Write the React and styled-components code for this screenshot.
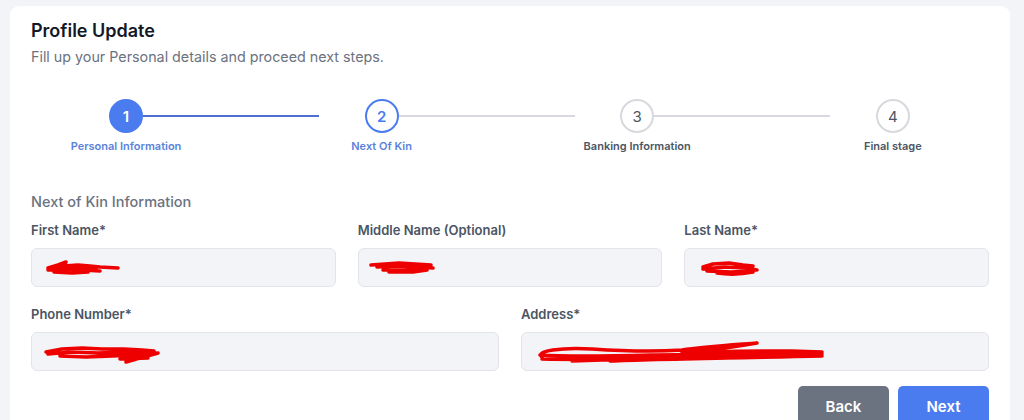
import React from 'react'
import styled, { createGlobalStyle } from 'styled-components';

const steps = [
  { n: 1, label: 'Personal Information', state: 'done' },
  { n: 2, label: 'Next Of Kin', state: 'active' },
  { n: 3, label: 'Banking Information', state: 'todo' },
  { n: 4, label: 'Final stage', state: 'todo' },
];

// scribbles that hide the filled-in values
const Scribble = ({ w, d }) => (
  <svg width={w} height="26" viewBox={`0 0 ${w} 26`} fill="none">
    <path d={d} stroke="#ee0000" strokeWidth="3.6" strokeLinecap="round" strokeLinejoin="round" />
  </svg>
);

const Field = ({ label, children }) => (
  <FieldWrap>
    <Label>{label}</Label>
    <Input>{children}</Input>
  </FieldWrap>
);

const App = () => {
  return (
    <>
      <GlobalStyle />
      <Page>
        <Card>
          <Title>Profile Update</Title>
          <Subtitle>Fill up your Personal details and proceed next steps.</Subtitle>

          <Stepper>
            {steps.map((s, i) => (
              <Step key={s.n}>
                <Marker>
                  <Circle $state={s.state}>{s.n}</Circle>
                  <StepLabel $state={s.state}>{s.label}</StepLabel>
                </Marker>
                {i < steps.length - 1 && <Connector $done={s.state === 'done'} />}
              </Step>
            ))}
          </Stepper>

          <Section>Next of Kin Information</Section>

          <Row $cols={3}>
            <Field label="First Name*">
              <Scribble w={80} d="M6 13 L16 10 L24 7 L22 11 L36 10 L48 11 L58 12 L76 13 M6 15 L22 14 L40 15 L58 16 M12 17 L30 18 L46 17 M14 12 L40 13 L54 14" />
            </Field>
            <Field label="Middle Name (Optional)">
              <Scribble w={70} d="M2 10 L16 9 L30 8 L46 9 L62 10 M8 12 L28 11 L50 12 L64 13 M14 15 L36 15 L56 15 M20 17 L44 17 L58 15" />
            </Field>
            <Field label="Last Name*">
              <Scribble w={70} d="M8 12 L18 9 L34 8 L48 10 L58 11 M8 14 L30 12 L52 13 L62 15 M12 16 L36 17 L56 16 M22 18 C36 20 48 19 58 17" />
            </Field>
          </Row>

          <Row $cols={2}>
            <Field label="Phone Number*">
              <Scribble w={120} d="M4 13 L20 10 L40 9 L60 10 L82 10 L100 11 L112 12 M6 15 L30 13 L56 14 L84 13 L108 15 M18 17 L44 18 L70 17 L96 16 L114 14 M78 20 L106 19 M84 23 L116 14" />
            </Field>
            <Field label="Address*">
              <Scribble w={300} d="M10 18 C2 12 30 8 60 10 C90 12 120 13 150 11 C170 8 200 6 225 4 C200 8 175 12 150 14 C180 12 220 12 260 12 L290 13 M8 16 C40 18 80 17 120 16 C160 15 200 16 240 15 L290 15 M10 20 C60 21 110 20 160 19 C200 19 240 18 280 17 M40 22 C80 21 120 19 160 18 M78 22 C120 20 200 19 290 17" />
            </Field>
          </Row>

          <Actions>
            <Button $variant="secondary">Back</Button>
            <Button>Next</Button>
          </Actions>
        </Card>
      </Page>
    </>
  )
}

export default App;

const GlobalStyle = createGlobalStyle`
  html, body {
    margin: 0;
    padding: 0;
    background: #f3f4f8;
    font-family: Inter, "Liberation Sans", sans-serif;
  }
`

const Page = styled.div`
  width: 1024px;
  height: 420px;
  overflow: hidden;
  padding: 6px 14px 0 10px;
  box-sizing: border-box;
`

const Card = styled.div`
  background: #ffffff;
  border-radius: 9px;
  padding: 12px 21px 30px 21px;
  height: 440px;
  box-sizing: border-box;
`

const Title = styled.h1`
  margin: 0;
  font-size: 18px;
  line-height: 26px;
  font-weight: 600;
  color: #111827;
`

const Subtitle = styled.p`
  margin: 3px 0 0;
  font-size: 14.3px;
  line-height: 20px;
  color: #6b7280;
`

const Stepper = styled.div`
  display: flex;
  margin: 32px 0 0 78px;
`

const Step = styled.div`
  display: flex;
  align-items: flex-start;
  width: 255.6px;
  flex: none;
`

const Marker = styled.div`
  display: flex;
  flex-direction: column;
  align-items: center;
  width: 34px;
  flex: none;
`

const Circle = styled.div`
  width: 34px;
  height: 34px;
  box-sizing: border-box;
  border-radius: 50%;
  display: flex;
  align-items: center;
  justify-content: center;
  font-size: 15px;
  font-weight: ${({ $state }) => ($state === 'todo' ? 400 : 600)};
  background: ${({ $state }) => ($state === 'done' ? '#4a7cf0' : '#ffffff')};
  color: ${({ $state }) => ($state === 'done' ? '#ffffff' : $state === 'active' ? '#4a7cf0' : '#4b5563')};
  border: 2px solid ${({ $state }) => ($state === 'todo' ? '#d7d9de' : '#4a7cf0')};
`

const StepLabel = styled.div`
  margin-top: 6px;
  white-space: nowrap;
  font-size: 11px;
  font-weight: 600;
  color: ${({ $state }) => ($state === 'todo' ? '#4b5563' : '#5b82db')};
`

const Connector = styled.div`
  width: 176px;
  height: 2px;
  margin-top: 16px;
  background: ${({ $done }) => ($done ? '#4f70d2' : '#d7d9de')};
`

const Section = styled.h2`
  margin: 39px 0 0;
  font-size: 14.5px;
  line-height: 20px;
  font-weight: 500;
  color: #6b7280;
`

const Row = styled.div`
  display: grid;
  grid-template-columns: repeat(${({ $cols }) => $cols}, 1fr);
  column-gap: 22px;
  margin-top: ${({ $cols }) => ($cols === 3 ? '9px' : '18px')};
`

const FieldWrap = styled.div`
  display: flex;
  flex-direction: column;
`

const Label = styled.label`
  font-size: 13px;
  line-height: 18px;
  font-weight: 600;
  color: #4b5563;
`

const Input = styled.div`
  margin-top: 9px;
  height: 39px;
  box-sizing: border-box;
  border: 1px solid #e2e4e9;
  border-radius: 6px;
  background: #f3f4f8;
  display: flex;
  align-items: center;
  padding: 0 10px;
`

const Actions = styled.div`
  display: flex;
  justify-content: flex-end;
  gap: 9px;
  margin-top: 15px;
`

const Button = styled.button`
  width: 91px;
  height: 40px;
  border: none;
  border-radius: 5px;
  font-family: inherit;
  font-size: 15px;
  font-weight: 600;
  color: #ffffff;
  background: ${({ $variant }) => ($variant === 'secondary' ? '#6b7280' : '#4a7cf0')};
`
